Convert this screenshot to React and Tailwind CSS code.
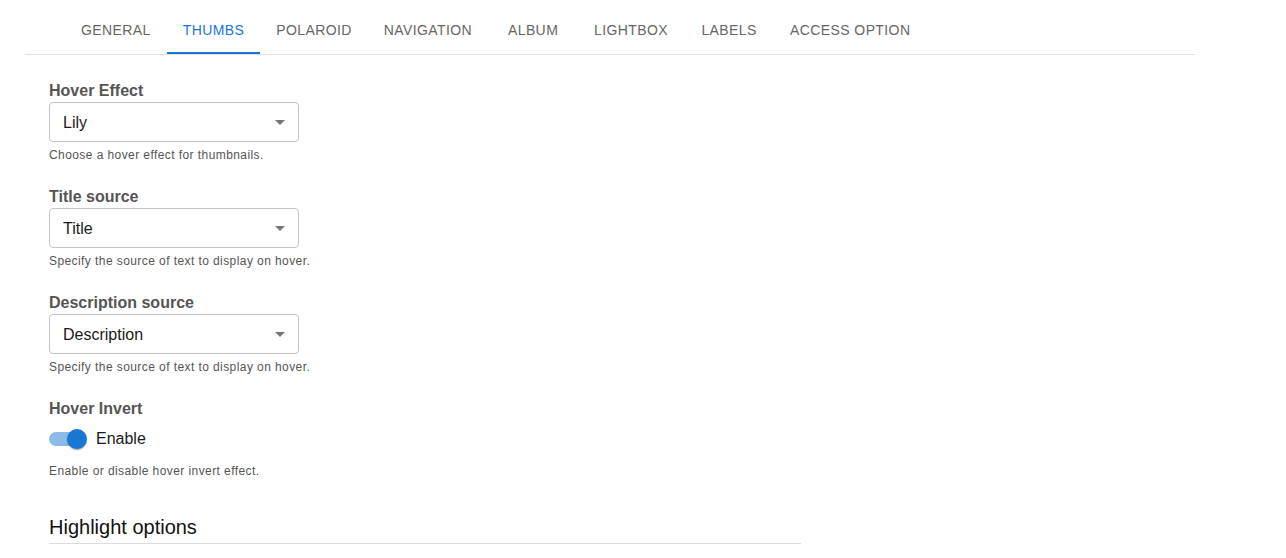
import React from "react";

const tabs = ["GENERAL", "THUMBS", "POLAROID", "NAVIGATION", "ALBUM", "LIGHTBOX", "LABELS", "ACCESS OPTION"];

function Caret() {
  return (
    <svg width="10" height="5" viewBox="0 0 10 5" className="block">
      <path d="M0 0 L10 0 L5 5 Z" fill="#757575" />
    </svg>
  );
}

function SelectField({ label, value, help }) {
  return (
    <div className="flex flex-col">
      <div className="text-[16px] leading-[19px] font-bold text-[#555555] mb-[2px]">{label}</div>
      <div className="w-[250px] h-[40px] border border-[#c4c4c4] rounded-[4px] flex items-center justify-between pl-[13px] pr-[13px]">
        <span className="text-[16px] text-[#1a1a1a] pt-[2px]">{value}</span>
        <Caret />
      </div>
      <div className="text-[12px] leading-[14px] text-[#555555] mt-[6px] tracking-[0.035em]">{help}</div>
    </div>
  );
}

export default function App() {
  return (
    <div className="w-[1286px] h-[558px] bg-white overflow-hidden" style={{ fontFamily: '"Liberation Sans", Arial, sans-serif' }}>
      <div className="ml-[25px] w-[1170px] border-b border-[#e0e0e0] h-[55px] flex pl-[40px]">
        {tabs.map((t) => {
          const active = t === "THUMBS";
          return (
            <div
              key={t}
              className={
                "relative min-w-[90px] px-[16px] flex items-center justify-center text-[14px] tracking-[0.02857em] h-[54px] pt-[6px] " +
                (active ? "text-[#1976d2]" : "text-[#666666]")
              }
            >
              {t}
              {active && <div className="absolute left-0 right-0 bottom-0 h-[2px] bg-[#1976d2]" />}
            </div>
          );
        })}
      </div>
      <div className="pl-[49px] pt-[26px] flex flex-col">
        <div className="flex flex-col gap-[25px]">
          <SelectField label="Hover Effect" value="Lily" help="Choose a hover effect for thumbnails." />
          <SelectField label="Title source" value="Title" help="Specify the source of text to display on hover." />
          <SelectField label="Description source" value="Description" help="Specify the source of text to display on hover." />
        </div>
        <div className="flex flex-col mt-[25px]">
          <div className="text-[16px] leading-[19px] font-bold text-[#555555]">Hover Invert</div>
          <div className="flex items-center mt-[9px] h-[24px]">
            <div className="relative w-[38px] h-[20px] flex items-center">
              <div className="w-[34px] h-[14px] rounded-full bg-[#8dbbe9]" />
              <div className="absolute right-0 top-0 w-[20px] h-[20px] rounded-full bg-[#1976d2] shadow-[0_2px_1px_-1px_rgba(0,0,0,0.2),0_1px_1px_0_rgba(0,0,0,0.14),0_1px_3px_0_rgba(0,0,0,0.12)]" />
            </div>
            <span className="ml-[9px] text-[16px] text-[#1a1a1a]">Enable</span>
          </div>
          <div className="text-[12px] leading-[14px] text-[#555555] mt-[13px] tracking-[0.035em]">Enable or disable hover invert effect.</div>
        </div>
        <div className="mt-[37px] w-[752px] border-b border-[#dcdcdc] pb-[4px]">
          <div className="text-[20px] leading-[24px] text-[#111111]">Highlight options</div>
        </div>
      </div>
    </div>
  );
}
